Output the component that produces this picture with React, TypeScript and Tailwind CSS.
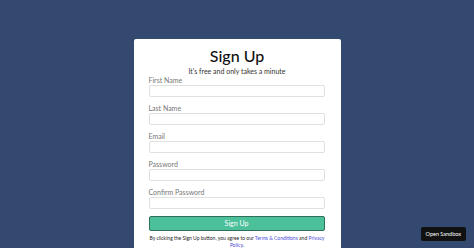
const fields = ["First Name", "Last Name", "Email", "Password", "Confirm Password"];

export default function App() {
  return (
    <div
      className="relative h-screen overflow-hidden bg-[#34496f] pt-[39px]"
      style={{ fontFamily: "Lato, 'Open Sans', sans-serif" }}
    >
      <div className="mx-auto w-[207px] rounded-[2px] bg-white px-[15px] pb-4 pt-[7px]">
        <h1 className="text-center text-[16px] leading-[20px] font-medium text-[#111]">Sign Up</h1>
        <p className="text-center text-[7px] leading-[10px] text-[#333]">
          It's free and only takes a minute
        </p>
        {fields.map((f) => (
          <div key={f} className="mb-[7px]">
            <label className="block text-[7px] leading-[9px] text-[#777]">{f}</label>
            <div className="h-[12px] w-[176px] rounded-[2px] border border-[#e0e0e0] bg-white" />
          </div>
        ))}
        <button className="mt-[2px] flex h-[15px] w-[176px] items-center justify-center rounded-[2px] border border-[#2e6f5a] bg-[#4cbf9b] text-[7px] text-white">
          Sign Up
        </button>
        <p className="mt-[4px] text-center text-[5px] leading-[7px] text-[#222]">
          By clicking the Sign Up button, you agree to our{" "}
          <span className="text-[#4b4bd8]">Terms &amp; Conditions</span> and{" "}
          <span className="text-[#4b4bd8]">Privacy Policy</span>.
        </p>
      </div>
      <div className="fixed bottom-[7px] right-[8px] flex h-[14px] items-center rounded-[2px] bg-[#111] px-[5px] text-[5.5px] text-white">
        Open Sandbox
      </div>
    </div>
  );
}
